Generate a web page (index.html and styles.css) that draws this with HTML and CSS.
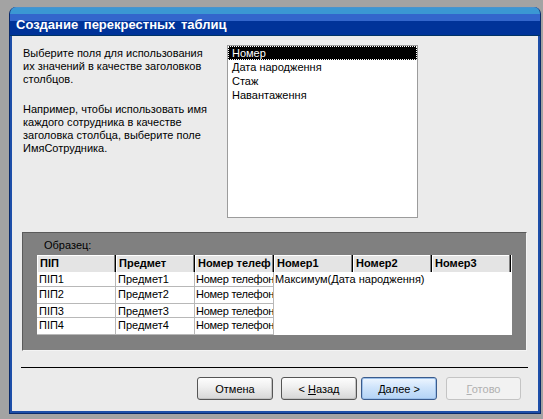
FILE: index.html
```html
<!DOCTYPE html>
<html lang="ru">
<head>
<meta charset="utf-8">
<title>Создание перекрестных таблиц</title>
<link rel="stylesheet" href="styles.css">
</head>
<body>
<div class="window">
  <div class="titlebar"><span class="title">Создание перекрестных таблиц</span></div>
  <div class="content">
    <div class="top">
      <div class="desc">
        <p>Выберите поля для использования их значений в качестве заголовков столбцов.</p>
        <p class="p2">Например, чтобы использовать имя каждого сотрудника в качестве заголовка столбца, выберите поле ИмяСотрудника.</p>
      </div>
      <div class="listbox">
        <div class="item selected">Номер</div>
        <div class="item">Дата народження</div>
        <div class="item">Стаж</div>
        <div class="item">Навантаження</div>
      </div>
    </div>
    <div class="sample">
      <div class="sample-label">Образец:</div>
      <div class="grid">
        <div class="hd">ПІП</div>
        <div class="hd">Предмет</div>
        <div class="hd">Номер телеф</div>
        <div class="hd">Номер1</div>
        <div class="hd">Номер2</div>
        <div class="hd">Номер3</div>

        <div class="cell">ПІП1</div>
        <div class="cell">Предмет1</div>
        <div class="cell tight">Номер телефон</div>
        <div class="merged">Максимум(Дата народження)</div>

        <div class="cell">ПІП2</div>
        <div class="cell">Предмет2</div>
        <div class="cell tight">Номер телефон</div>

        <div class="cell">ПІП3</div>
        <div class="cell">Предмет3</div>
        <div class="cell tight">Номер телефон</div>

        <div class="cell">ПІП4</div>
        <div class="cell">Предмет4</div>
        <div class="cell tight">Номер телефон</div>
      </div>
    </div>
    <div class="separator"></div>
    <div class="buttons">
      <button class="btn">Отмена</button>
      <button class="btn back">&lt; <u>Н</u>азад</button>
      <button class="btn next default"><u>Д</u>алее &gt;</button>
      <button class="btn finish" disabled><u>Г</u>отово</button>
    </div>
  </div>
</div>
</body>
</html>
```
FILE: styles.css
```css
html, body {
  margin: 0;
  padding: 0;
}
body {
  background: #a3a3a3;
  width: 543px;
  height: 419px;
  overflow: hidden;
  font-family: "Liberation Sans", Arial, sans-serif;
  font-size: 11px;
  color: #000;
}
.window {
  margin: 7px 0 0 9px;
  width: 532px;
  height: 407px;
  box-sizing: border-box;
  display: flex;
  flex-direction: column;
  border-radius: 7px 7px 0 0;
  background: #1d4ea8;
  border: 1px solid #0a2a6a;
  border-top: none;
  overflow: hidden;
}
.titlebar {
  height: 29px;
  flex: none;
  background: linear-gradient(to bottom,
    #5a8fc8 0px, #3b97d3 1px, #3b97d3 7px,
    #3366cc 7px, #3366cc 14px,
    #003399 14px, #003399 28px,
    #003366 28px);
  display: flex;
  align-items: center;
  padding-left: 6px;
}
.title {
  color: #fff;
  font-weight: bold;
  font-size: 13px;
  margin-top: 6px;
  word-spacing: 2px;
}
.content {
  margin: 0 2px 2px 2px;
  flex: 1;
  background: #ebebeb;
  display: flex;
  flex-direction: column;
}
.top {
  display: flex;
  padding: 9px 0 0 11px;
}
.desc {
  width: 204px;
  margin-top: 2px;
  line-height: 13px;
}
.desc p {
  margin: 0;
  width: 185px;
}
.desc .p2 {
  margin-top: 17px;
}
.listbox {
  width: 191px;
  height: 173px;
  box-sizing: border-box;
  border: 1px solid #9c9c9c;
  background: #fff;
}
.item {
  height: 14px;
  line-height: 14px;
  padding-left: 4px;
  font-size: 11px;
}
.item.selected {
  background: #000;
  color: #fff;
  outline: 1px dotted #fff;
  outline-offset: -1px;
}
.sample {
  margin: 14px 0 0 10px;
  width: 505px;
  height: 119px;
  box-sizing: border-box;
  background: #808080;
  border: 1px solid;
  border-color: #5a5a5a #f4f4f4 #f4f4f4 #5a5a5a;
  padding: 6px 0 0 14px;
}
.sample-label {
  color: #000;
  height: 16px;
  line-height: 13px;
  padding-left: 7px;
}
.grid {
  display: grid;
  grid-template-columns: repeat(6, 79px);
  grid-template-rows: 17px 15px 17px 14px 17px;
  width: 475px;
  background: #fff;
}
.hd {
  background: #e4e4e4;
  font-weight: bold;
  line-height: 16px;
  padding-left: 3px;
  box-shadow: inset -1px 0 0 #000, inset -2px 0 0 #808080, inset 1px 1px 0 #fff;
  overflow: hidden;
  white-space: nowrap;
}
.cell {
  background: #fff;
  padding-left: 2px;
  line-height: 15px;
  border-bottom: 1px solid #b8b8b8;
  border-right: 1px solid #b8b8b8;
  box-sizing: border-box;
  overflow: hidden;
  white-space: nowrap;
}
.cell.tight {
  padding-left: 1px;
  letter-spacing: -0.25px;
}
.merged {
  grid-column: 4 / 7;
  grid-row: 2 / 6;
  background: #fff;
  line-height: 14px;
  padding-left: 1px;
}
.separator {
  margin: 16px 0 0 9px;
  width: 507px;
  height: 1px;
  background: #000;
}
.buttons {
  display: flex;
  justify-content: flex-end;
  padding: 9px 17px 0 0;
  gap: 8px;
}
.btn {
  width: 76px;
  height: 23px;
  box-sizing: border-box;
  font-family: "Liberation Sans", Arial, sans-serif;
  font-size: 11px;
  color: #000;
  border: 1px solid #555;
  border-radius: 3px;
  background: linear-gradient(to bottom, #fdfdfd 0%, #f0f0f0 40%, #d6d6d6 100%);
  box-shadow: inset -1px -1px 0 #c2c2c2;
  padding: 0;
}
.btn u {
  text-decoration: underline;
}
.back {
  margin-right: -4px;
}
.default {
  border-color: #3a5b8c;
  background: linear-gradient(to bottom, #eef6ff 0%, #cfe4fb 45%, #b3d3f5 100%);
  box-shadow: inset 0 0 0 1px #9cc0ea;
}
.finish {
  width: 75px;
  margin-left: 1px;
  color: #b0b0b0;
  border-color: #c4c4c4;
  background: #f2f2f2;
  box-shadow: none;
}
```
